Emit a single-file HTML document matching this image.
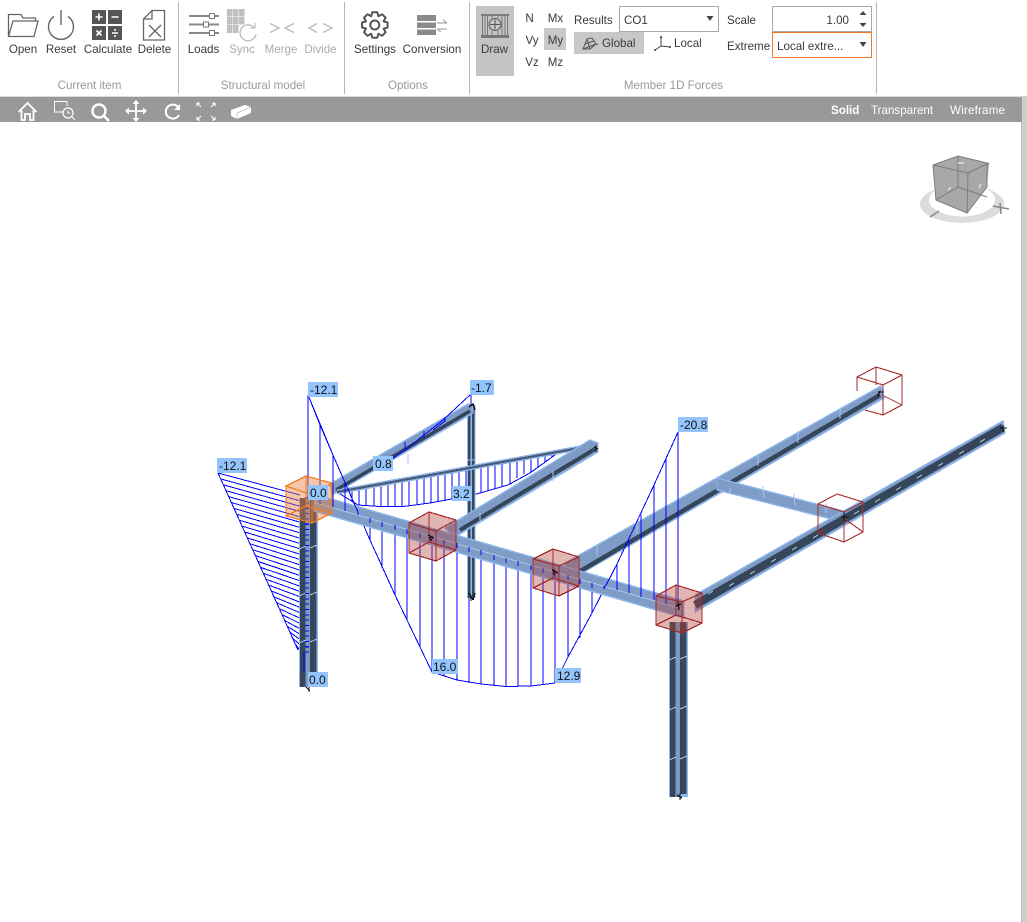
<!DOCTYPE html>
<html lang="en"><head><meta charset="utf-8"><title>Member 1D Forces</title>
<style>
html,body{margin:0;padding:0;background:#fff;width:1027px;height:922px;overflow:hidden}
svg{display:block;font-family:"Liberation Sans",sans-serif;font-size:11.6px}
.t{fill:#3a3a3a;text-anchor:middle}
.d{fill:#aaa;text-anchor:middle}
.g{fill:#999;text-anchor:middle}
.s{fill:#3a3a3a}
.w{fill:#fff}
.l{fill:#93c4fb}
.lt{fill:#111;font-size:12px}
.cube{fill:rgba(176,62,52,.38);stroke:#a62a2a;stroke-width:1.2;stroke-linejoin:round}
.edge{fill:none;stroke:#a62a2a;stroke-width:1.2}
.bm{fill:#7f9cc6;stroke:#8cb6ec;stroke-width:1.4}
.dk{stroke:#35455a;fill:none}
</style></head><body>
<svg width="1027" height="922" viewBox="0 0 1027 922" xmlns="http://www.w3.org/2000/svg">
<rect width="1027" height="922" fill="#fff"/>

<!-- ribbon backgrounds -->
<rect x="476" y="6" width="38" height="70" fill="#c4c4c4"/>
<rect x="544" y="28" width="22" height="22" fill="#c8c8c8"/>
<rect x="574" y="32" width="70" height="22" fill="#c8c8c8"/>
<g stroke="#b5b5b5" stroke-width="1">
<path d="M178.500 2V94M344.500 2V94M469.500 2V94M876.500 2V94"/>
</g>

<!-- Open -->
<path d="M8.500 36.500V14.500H21L23 18H35.500V21M8.500 36.500L13 21H38L34 36.500Z" fill="none" stroke="#666" stroke-width="1.300"/>
<!-- Reset -->
<path d="M54 16.500A12.500 12.500 0 1 0 68 16.500M61 10V25" fill="none" stroke="#666" stroke-width="1.400"/>
<!-- Calculate -->
<g fill="#555">
<rect x="92" y="10" width="14" height="14"/><rect x="108" y="10" width="14" height="14"/>
<rect x="92" y="26" width="14" height="14"/><rect x="108" y="26" width="14" height="14"/>
</g>
<path d="M95.500 17H102.500M99 13.500V20.500M111.500 17H118.500M96.500 30.500L101.500 35.500M101.500 30.500L96.500 35.500M112 33H118" stroke="#fff" stroke-width="1.600" fill="none"/>
<circle cx="115" cy="30" r="1" fill="#fff"/><circle cx="115" cy="36" r="1" fill="#fff"/>
<!-- Delete -->
<path d="M143.500 40V19L152 10.500H164.500V40ZM143.500 19H152V10.500" fill="none" stroke="#666" stroke-width="1.300"/>
<path d="M149 25L161 37M161 25L149 37" stroke="#666" stroke-width="1.300"/>
<!-- Loads -->
<path d="M189 16H219M189 24.500H219M189 33H219" stroke="#8a8a8a" stroke-width="2"/>
<g fill="#fff" stroke="#777"><rect x="209.500" y="13.500" width="5" height="5"/><rect x="203.500" y="22" width="5" height="5"/><rect x="209.500" y="30.500" width="5" height="5"/></g>
<!-- Sync -->
<g fill="#c0c0c0">
<rect x="227" y="9" width="5.500" height="7.500"/><rect x="233" y="9" width="5.500" height="7.500"/><rect x="239" y="9" width="5.500" height="7.500"/>
<rect x="227" y="17" width="5.500" height="7.500"/><rect x="233" y="17" width="5.500" height="7.500"/><rect x="239" y="17" width="5.500" height="7.500"/>
<rect x="227" y="25" width="5.500" height="8"/><rect x="233" y="25" width="5.500" height="8"/>
</g>
<path d="M254 27.500A8 8 0 1 0 256 34" fill="none" stroke="#b5b5b5" stroke-width="1.200"/>
<path d="M255 23V28H250" fill="none" stroke="#b5b5b5" stroke-width="1"/>
<!-- Merge / Divide -->
<path d="M270 23.500L279 28L270 32.500M294 23.500L285 28L294 32.500M317 23.500L309 28L317 32.500M323 23.500L332 28L323 32.500" fill="none" stroke="#bdbdbd" stroke-width="1.400"/>
<!-- Settings -->
<polygon transform="translate(374.800 25)" points="12.76,-2.48 12.76,2.48 8.8,3.6 10.78,7.27 7.27,10.78 3.6,8.8 2.48,12.76 -2.48,12.76 -3.6,8.8 -7.27,10.78 -10.78,7.27 -8.8,3.6 -12.76,2.48 -12.76,-2.48 -8.8,-3.6 -10.78,-7.27 -7.27,-10.78 -3.6,-8.8 -2.48,-12.76 2.48,-12.76 3.6,-8.8 7.27,-10.78 10.78,-7.27 8.8,-3.6" fill="#fff" stroke="#555" stroke-width="2" stroke-linejoin="round"/>
<circle cx="374.800" cy="25" r="4.500" fill="#fff" stroke="#555" stroke-width="2"/>
<!-- Conversion -->
<g fill="#8a8a8a"><rect x="417" y="15" width="19" height="6"/><rect x="417" y="22.500" width="19" height="5.500"/><rect x="417" y="29.500" width="19" height="5.500"/></g>
<path d="M437 23H447M443 20L447 23M447 29H437M441 32L437 29" fill="none" stroke="#aaa" stroke-width="1.300"/>
<!-- Draw -->
<path d="M481 15H509" stroke="#666" stroke-width="1.500"/><path d="M481 36.500H509" stroke="#777" stroke-width="3"/>
<path d="M482.500 15V35M485 15V35M487.500 15V35M502 15V35M505 15V35M507.500 15V35M492 15V18M498 15V18M492 31V35M498 31V35" stroke="#777" stroke-width="1"/>
<circle cx="495" cy="24.500" r="6" fill="#c4c4c4" stroke="#555"/>
<path d="M490 24.500H500M495 19.500V29.500" stroke="#555"/>
<!-- Global icon -->
<path d="M583 49L587 39L592 38L596 44L590 49ZM587 39L590 49M583 49L596 44M585 44L594 41M598 44.500L595 43.500" fill="none" stroke="#555" stroke-width="1"/>
<!-- Local icon -->
<path d="M661 36V46L655 50M661 46L670 47" fill="none" stroke="#444"/>
<path d="M659.500 38L661 35.500L662.500 38Z" fill="#444"/><circle cx="655" cy="50" r="1" fill="#444"/><circle cx="670" cy="47" r="1" fill="#444"/>

<!-- ribbon text -->
<text class="t" x="23" y="53">Open</text><text class="t" x="61" y="53">Reset</text><text class="t" x="108" y="53">Calculate</text><text class="t" x="154.500" y="53">Delete</text>
<text class="t" x="203.500" y="53">Loads</text><text class="d" x="242" y="53">Sync</text><text class="d" x="281" y="53">Merge</text><text class="d" x="320.500" y="53">Divide</text>
<text class="t" x="375" y="53">Settings</text><text class="t" x="432" y="53">Conversion</text><text class="t" x="494.500" y="53">Draw</text>
<text class="g" x="89.500" y="89">Current item</text><text class="g" x="263" y="89">Structural model</text><text class="g" x="408" y="89">Options</text><text class="g" x="673.500" y="89">Member 1D Forces</text>
<text class="t" x="529.500" y="22">N</text><text class="t" x="555.500" y="22">Mx</text>
<text class="t" x="532" y="44">Vy</text><text class="t" x="555.500" y="44">My</text>
<text class="t" x="532" y="66">Vz</text><text class="t" x="555.500" y="66">Mz</text>
<text class="s" x="574" y="24">Results</text>
<rect x="619.500" y="6.500" width="99" height="25" fill="#fff" stroke="#aaa"/>
<text class="s" x="624" y="24">CO1</text>
<path d="M706.500 16H713.500L710 21Z" fill="#444"/>
<text class="s" x="602" y="47">Global</text><text class="s" x="674" y="47">Local</text>
<text class="s" x="727" y="24">Scale</text><text class="s" x="727" y="50">Extreme</text>
<rect x="772.500" y="6.500" width="99" height="25" fill="#fff" stroke="#aaa"/>
<text class="s" x="849" y="24" text-anchor="end">1.00</text>
<path d="M859.500 15L863 11L866.500 15ZM859.500 23H866.500L863 27Z" fill="#444"/>
<rect x="772.500" y="32.500" width="99" height="25" fill="#fff" stroke="#f07a28"/>
<text class="s" x="777" y="50">Local extre...</text>
<path d="M859.500 42H866.500L863 47Z" fill="#444"/>

<!-- grey bar -->
<rect x="0" y="96" width="1027" height="1" fill="#ddd"/>
<rect x="0" y="97" width="1022" height="25" fill="#999"/>
<rect x="1022" y="96" width="5" height="826" fill="#cdcdcd"/>
<rect x="1021" y="122" width="1" height="800" fill="#bdbdbd"/>
<text class="w" x="831" y="114" font-weight="bold">Solid</text><text class="w" x="871" y="114">Transparent</text><text class="w" x="950" y="114" textLength="55">Wireframe</text>
<g fill="none" stroke="#fff">
<path d="M18.500 112L27.500 103L36.500 112M21.500 110V120H25V114H30V120H33.500V110" stroke-width="1.800"/>
<path d="M64 112H54.500V101.500H67V106" stroke-width="1"/><circle cx="68" cy="113" r="5" stroke-width="1.200"/><path d="M71.500 116.500L75 120M68 110.500V113H70" stroke-width="1"/>
<circle cx="99" cy="111" r="6.500" stroke-width="2.400"/><path d="M103.500 115.500L109 121" stroke-width="2.600"/>
<path d="M136 103V119M127 111H145" stroke-width="1.800"/>
<path d="M178.500 107.500A7 7 0 1 0 179 115" stroke-width="2"/>
<path d="M197 103L201 107M197 103V106M197 103H200M215 103L211 107M215 103V106M215 103H212M197 120L201 116M197 120V117M197 120H200M215 120L211 116M215 120V117M215 120H212" stroke-width="1.100"/>
</g>
<path d="M136 100L139.500 104H132.500ZM136 122L132.500 118H139.500ZM125 111L129 107.500V114.500ZM147 111L143 107.500V114.500Z" fill="#fff"/>
<path d="M180 104V110H174Z" fill="#fff"/>
<path d="M231 110L245 105L251 107V113L237 119L231 116Z" fill="#fff"/>
<path d="M237 113V119M237 113L251 107" stroke="#bbb" stroke-width=".8" fill="none"/>

<!-- nav cube -->
<path fill-rule="evenodd" fill="#dcdcdc" d="M920 204A42 19 0 1 0 1004 204A42 19 0 1 0 920 204ZM929 200A33 16.500 0 1 1 995 200A33 16.500 0 1 1 929 200Z"/>
<path d="M933 165L958 156L989 163L987 187L967 213L936 200Z" fill="#a8a8a8"/>
<path d="M933 165L968 173L989 163M968 173L967 213M958 156V187L936 200M958 187L987 197M933 165L936 200L967 213L987 187V163L958 156L933 165" fill="none" stroke="#7c7c7c" stroke-width="1"/>
<path d="M958 163H964M948 190L951 187M979 188L981 184" stroke="#eee" stroke-width="1.200"/>
<path d="M993 206L1009 209M1000 203L1001 214M930 217L939 211" stroke="#888" stroke-width="1.500"/>

<g shape-rendering="crispEdges">
<!-- under-layer diagram lines -->
<g fill="none" stroke="#0000ff" stroke-width="1">
<path d="M218 473L298 650"/>
<path d="M218 473L300 495M220.700 478.900L300 500.800M223.300 484.800L300 506.200M226 490.700L300 511.500M228.700 496.600L300 516.800M231.300 502.500L300 522.200M234 508.400L300 527.500M236.700 514.300L300 532.800M239.300 520.200L300 538.200M242 526.100L300 543.500M244.700 532L300 548.800M247.300 537.900L300 554.200M250 543.800L300 559.500M252.700 549.700L300 564.800M255.300 555.600L300 570.200M258 561.500L300 575.500M260.700 567.400L300 580.800M263.300 573.300L300 586.200M266 579.200L300 591.500M268.700 585.100L300 596.800M271.300 591L300 602.200M274 596.900L300 607.500M276.700 602.800L300 612.800M279.300 608.700L300 618.200M282 614.600L300 623.500M284.700 620.500L300 628.800M287.300 626.400L300 634.200M290 632.300L300 639.500M292.700 638.200L300 644.800M295.300 644.100L300 650.200"/>
<path d="M370 518V540M382 522V568M395 525V595M407 529V620M420 533V647M432 536V672M444 540V676M457 543V680M469 547V683M481 550V684M494 556V686M506 558V686M518 561V686M531 565V686M543 568V684M555 572V683M568 576V657M580 579V638M592 583V613"/>
<path d="M308 395L320 425L333 455L370 540L395 595L420 647L432 672L457 680L481 684L506 686.500L531 686L555 683L568 657L592 613L617 564L654 485L678 432V607"/>
<path d="M345 491V497M352 490V501M359 489V505M366 488V505M374 486V506M381 484V506M388 483V506M395 482V506M402 481V506M409 480V505M417 478V505M424 477V504M431 476V503M438 474V502M445 473V501M452 472V499M459 471V498M466 470V496M474 468V495M481 467V493M488 465V491M495 464V489M502 463V487M510 461V484M517 460V478M524 459V474M531 458V472M538 456V467M545 455V462M552 454V457"/>
<path d="M337 492L358 505L380 506.500L403 506.500L430 503L473 495L508 485L530 473L559 452L578 447"/>
</g>

<!-- columns -->
<g>
<rect x="299" y="498" width="19" height="189" fill="#8fb8ec"/>
<rect x="300" y="498" width="5.500" height="189" fill="#37465a"/>
<rect x="305.500" y="498" width="4.500" height="189" fill="#7d9ac2"/>
<rect x="310" y="498" width="6.500" height="184" fill="#37465a"/>
<rect x="467" y="405" width="8.500" height="193" fill="#8fb8ec"/>
<rect x="468" y="405" width="2.300" height="193" fill="#37465a"/>
<rect x="472" y="405" width="2.500" height="193" fill="#37465a"/>
<rect x="669" y="622" width="19" height="175" fill="#8fb8ec"/>
<rect x="670" y="622" width="5.500" height="175" fill="#37465a"/>
<rect x="675.500" y="622" width="4.500" height="175" fill="#7d9ac2"/>
<rect x="680" y="622" width="6.500" height="172" fill="#37465a"/>
<path d="M299 549L306 546M310 548L317 545M299 596L306 593M310 595L317 592M299 643L306 640M310 642L317 639M669 660L676 657M680 659L687 656M669 710L676 707M680 709L687 706M669 760L676 757M680 759L687 756M467 460H475M467 520H475" stroke="#a9c7f0" stroke-width="1" fill="none"/>
</g>

<!-- back beams -->
<polygon class="bm" points="330,484 468,404 473,406 473,413 332,495"/>
<path class="dk" stroke-width="3.500" d="M336 490L470 411"/>
<polyline points="337,492 585,447" fill="none" stroke="#8cb6ec" stroke-width="5"/>
<polyline points="337,492 585,447" fill="none" stroke="#4a5a70" stroke-width="2.200"/>
<polygon class="bm" points="445,528 590,440 598,443 598,452 455,537"/>
<path class="dk" stroke-width="4" d="M460 530L595 449"/>
<polygon class="bm" points="565,563 881,386 884,398 565,583"/>
<path class="dk" stroke-width="4.500" d="M572 576L880 395"/>
<polygon class="bm" points="717,478 843,511 843,522 717,490"/>
<polygon class="bm" points="695,595 1003,421 1005,433 695,612"/>
<path class="dk" stroke-width="8" d="M695 605L1003 427.500"/>
<path d="M708 594L713 591M729 586L734 583M750 574L755 571M771 562L776 559M792 550L797 547M813 538L818 535M854 514L859 511M875 502L880 499M896 490L901 487M917 478L922 475M938 466L943 463M959 454L964 451M980 442L985 439" stroke="#b8cce2" stroke-width=".9" fill="none"/>
<path d="M597 545L597 556M637 522L637 534M758 455L758 466M798 431L798 443M840 408L840 419M730 488L730 493M763 486L764 498M794 494L795 506M826 503L826 513M480 513L480 523M553 471L553 481M408 454L408 464" stroke="#a9c7f0" stroke-width="1" fill="none"/>

<!-- main beam -->
<polygon class="bm" points="314,494 684,601 684,618 314,511"/>
<path d="M314 502.500L684 609.500" stroke="#a9c7f0" stroke-width="1" fill="none"/>

<!-- front diagram lines -->
<g fill="none" stroke="#0000ff" stroke-width="1">
<path d="M308 395V500M320 425V504M333 455V507M345 483V511M358 512V515M370 518V523M382 522V527M395 525V530M407 529V534M420 533V538M432 536V541M444 540V545M457 543V548M469 547V552M481 550V555M494 555V560M506 558V563M518 561V566M531 565V570M543 568V573M555 572V577M568 575V580M580 579V584M592 583V588M604 586V589"/>
<path d="M617 564V590M629 540V593M641 515V597M654 485V600M666 459V604M678 432V607"/>
<path d="M604 589L617 564L654 485L678 432M308 395L333 455L358 512"/>
<path d="M471 394V405M471 394L443 420L405 450L385 464M445 418V422M424 431V438M405 442V451M445 421L433 430"/>
<path d="M307 497V657" stroke-width="4" stroke-dasharray="1.100 4.230"/>
<path d="M304 652V672" stroke-width="1"/>
</g>

<!-- cubes -->
<g>
<path d="M306 476L286 486V516L312 523L332 513V483Z" fill="rgba(232,128,60,.45)"/>
<path d="M306 476L286 486L312 495L332 483ZM286 486V516L312 523V495M312 523L332 513V483M286 516L306 506V476M306 506L332 513" fill="none" stroke="#f47a1f" stroke-width="1.200"/>

<path class="cube" d="M429 512L409 523V553L436 561L456 550V520Z"/>
<path class="edge" d="M409 523L436 531L456 520M436 531V561M409 553L429 542V512M429 542L456 550"/>
<path class="cube" d="M553 549L533 559V588L559 596L579 586V557Z"/>
<path class="edge" d="M533 559L559 566L579 557M559 566V596M533 588L553 578V549M553 578L579 586"/>
<path class="cube" d="M676 585L656 596V625L682 633L702 623V593Z"/>
<path class="edge" d="M656 596L682 602L702 593M682 602V633M656 625L676 615V585M676 615L702 623"/>
<path d="M837 494L818 504V533M837 494L863 502V532L844 542L818 533M818 504L844 512L863 502M844 512V542M818 533L825 529M845 519L863 532" fill="none" stroke="#a62a2a" stroke-width="1.100"/>
<path d="M876 367L857 377V391M876 367L902 375V405L883 415L865 410M857 377L883 385L902 375M883 385V415M876 367V385M884 396L902 405" fill="none" stroke="#a62a2a" stroke-width="1.100"/>
</g>

<!-- node marks -->
<g fill="none" stroke="#111" stroke-width="1.400">
<path d="M428 535L434 538M430 537L431 541"/><path d="M552 570L558 573M554 569V575"/><path d="M676 606L681 604M678 602L679 610"/>
<path d="M844 512V521M841 517H849"/><path d="M880 391L878 396M878 392H884"/><path d="M1003 425V432M1000 428H1007"/>
<path d="M469 407L473 404L475 410"/><path d="M594 447L598 449M596 445V452"/><path d="M469 593L473 600M475 593L473 600M471 596V601"/>
<path d="M306 687L310 691M309 685V692"/><path d="M677 795L682 798M680 793V800"/>
</g>
</g>

<!-- value labels -->
<rect class="l" x="217" y="458" width="30" height="15"/><text class="lt" x="219" y="470">-12.1</text>
<rect class="l" x="308" y="382" width="30" height="15"/><text class="lt" x="310" y="394">-12.1</text>
<rect class="l" x="308" y="485" width="20" height="15"/><text class="lt" x="310" y="497">0.0</text>
<rect class="l" x="373" y="456" width="20" height="15"/><text class="lt" x="375" y="468">0.8</text>
<rect class="l" x="452" y="486" width="20" height="15"/><text class="lt" x="453" y="498">3.2</text>
<rect class="l" x="470" y="380" width="24" height="15"/><text class="lt" x="471" y="392">-1.7</text>
<rect class="l" x="678" y="417" width="30" height="15"/><text class="lt" x="680" y="429">-20.8</text>
<rect class="l" x="432" y="659" width="26" height="15"/><text class="lt" x="433" y="671">16.0</text>
<rect class="l" x="555" y="668" width="26" height="15"/><text class="lt" x="557" y="680">12.9</text>
<rect class="l" x="308" y="672" width="20" height="15"/><text class="lt" x="309" y="684">0.0</text>
</svg>
</body></html>
